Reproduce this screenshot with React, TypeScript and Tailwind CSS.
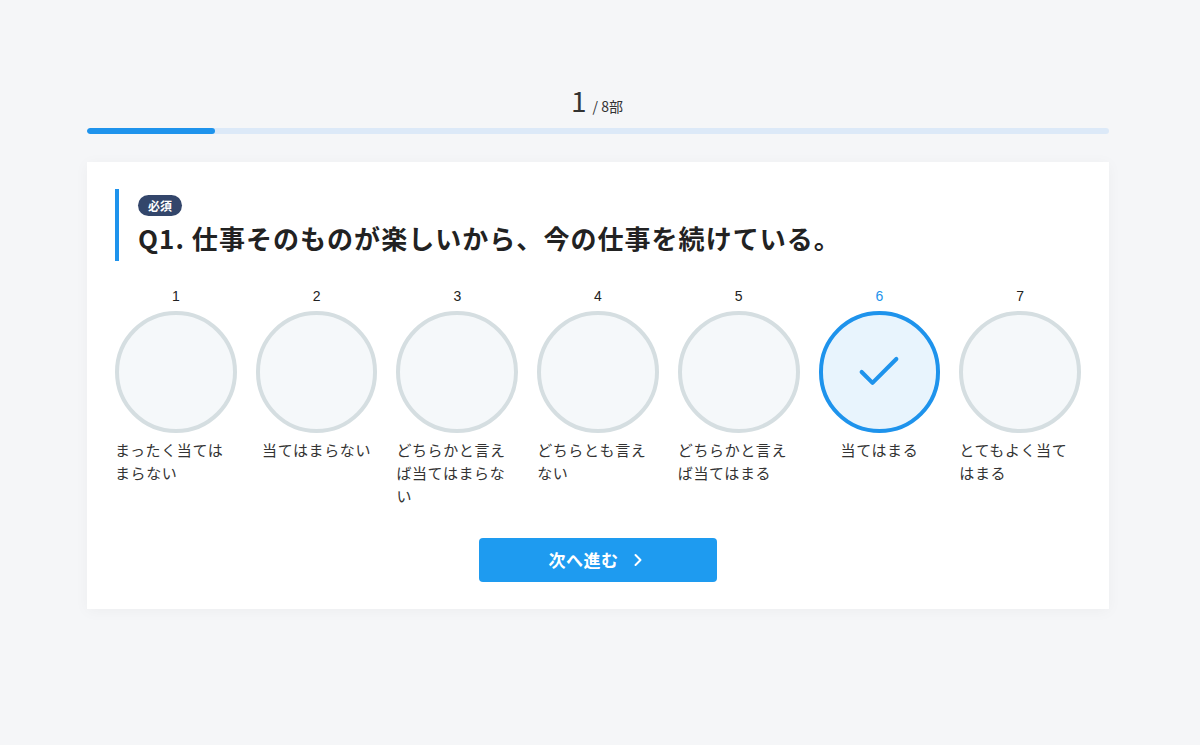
import { Check, ChevronRight } from "lucide-react";

const options = [
  { n: 1, label: "まったく当てはまらない" },
  { n: 2, label: "当てはまらない" },
  { n: 3, label: "どちらかと言えば当てはまらない" },
  { n: 4, label: "どちらとも言えない" },
  { n: 5, label: "どちらかと言えば当てはまる" },
  { n: 6, label: "当てはまる" },
  { n: 7, label: "とてもよく当てはまる" },
];

const selected = 6;

export default function App() {
  return (
    <div
      className="min-h-screen bg-[#f5f6f8] pt-[82px] text-[#333]"
      style={{ fontFamily: '"Noto Sans CJK JP", "Noto Sans", sans-serif' }}
    >
      <div className="w-[1022px] ml-[87px]">
        {/* Progress */}
        <div className="flex items-baseline justify-center gap-1.5 pr-[2px] text-[#333]">
          <span className="text-[28px] leading-[36px]">1</span>
          <span className="text-[14px]">/ 8部</span>
        </div>
        <div className="mt-[10px] h-[6px] rounded-full bg-[#dce9f8] overflow-hidden">
          <div className="h-full w-[12.5%] rounded-full bg-[#1e93ec]" />
        </div>

        {/* Card */}
        <div className="mt-[28px] bg-white px-[28px] pt-[27px] pb-[27px] shadow-[0_2px_14px_rgba(0,0,0,0.04)]">
          <div className="border-l-4 border-[#1e93ec] pl-[19px] pt-[6px] pb-[4px]">
            <div className="flex">
              <span className="h-[21px] rounded-full bg-[#33466b] px-[10px] text-[12px] leading-[21px] font-bold text-white">
                必須
              </span>
            </div>
            <h1 className="mt-[3px] text-[26px] leading-[38px] font-bold tracking-[0.04em] text-[#222]">
              Q1. 仕事そのものが楽しいから、今の仕事を続けている。
            </h1>
          </div>

          {/* Scale */}
          <div className="mt-[26px] grid grid-cols-7 gap-x-[19px]">
            {options.map((o) => {
              const on = o.n === selected;
              return (
                <div key={o.n} className="flex flex-col items-center">
                  <span
                    className={`text-[14px] leading-[18px] ${on ? "text-[#1e93ec]" : "text-[#222]"}`}
                    style={{ fontFamily: '"Liberation Sans", Arial, sans-serif' }}
                  >
                    {o.n}
                  </span>
                  <div
                    className={`mt-[6px] w-full aspect-square rounded-full border-4 flex items-center justify-center ${
                      on ? "border-[#1e93ec] bg-[#e8f4fd]" : "border-[#d5dee1] bg-[#f5f8fa]"
                    }`}
                  >
                    {on && <Check size={52} strokeWidth={1.9} className="text-[#1e93ec]" />}
                  </div>
                  <p className="mt-[5px] max-w-full text-left text-[15px] leading-[23px] tracking-[0.04em] text-[#333]">
                    {o.label}
                  </p>
                </div>
              );
            })}
          </div>

          <div className="mt-[31px] flex justify-center">
            <button className="w-[238px] h-[44px] rounded-[4px] bg-[#1e9bf0] text-white text-[17px] tracking-[0.03em] font-bold flex items-center justify-center gap-[9px]">
              次へ進む
              <ChevronRight size={20} strokeWidth={2.4} />
            </button>
          </div>
        </div>
      </div>
    </div>
  );
}
